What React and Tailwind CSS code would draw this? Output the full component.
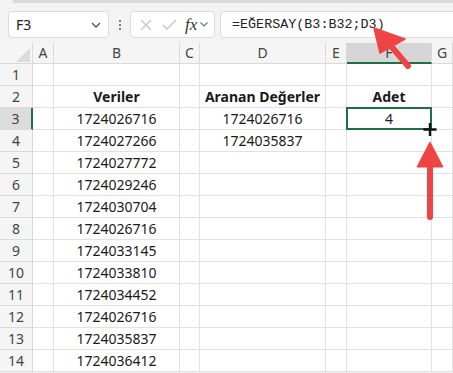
import React from "react";

const colB = [
  "1724026716","1724027266","1724027772","1724029246","1724030704","1724026716",
  "1724033145","1724033810","1724034452","1724026716","1724035837","1724036412",
];

function Cell({ children, className = "" }) {
  return (
    <div className={`border-r border-b border-[#e1e1e1] bg-white flex items-center justify-center text-[14px] text-[#1a1a1a] leading-none ${className}`}>
      {children}
    </div>
  );
}

function RowHead({ n, active }) {
  return (
    <div className={`border-r border-b border-[#dadada] flex items-center justify-center text-[14px] leading-none text-[#444] ${active ? "bg-[#dcdcdc] border-r-2 border-r-[#1e7145]" : "bg-[#f5f5f5]"}`}>
      {n}
    </div>
  );
}

export default function App() {
  const rows = [];
  for (let r = 1; r <= 14; r++) {
    const b = r === 2 ? <span className="font-bold">Veriler</span> : r >= 3 ? colB[r - 3] : "";
    const d = r === 2 ? <span className="font-bold">Aranan Değerler</span> : r === 3 ? "1724026716" : r === 4 ? "1724035837" : "";
    const f = r === 2 ? <span className="font-bold">Adet</span> : r === 3 ? "4" : "";
    rows.push(
      <React.Fragment key={r}>
        <RowHead n={r} active={r === 3} />
        <Cell />
        <Cell>{b}</Cell>
        <Cell />
        <Cell>{d}</Cell>
        <Cell />
        <Cell className="relative">
          {f}
          {r === 3 && <div className="absolute left-[-1px] top-[-1px] right-[-1px] bottom-[-1px] border-2 border-[#1e7145]" />}
        </Cell>
        <Cell />
      </React.Fragment>
    );
  }

  return (
    <div className="relative w-[453px] h-[373px] overflow-hidden bg-[#f3f3f3]" style={{ fontFamily: '"Noto Sans", "Open Sans", sans-serif' }}>
      <div className="h-[3px] ml-[13px] bg-[#d9d9d9]" />
      {/* top bar */}
      <div className="h-[40px] flex items-center pt-[3px]">
        <div className="shrink-0 ml-[8px] w-[101px] h-[27px] bg-white border border-[#dcdcdc] rounded-[4px] flex items-center justify-between pl-[7px] pr-[6px]">
          <span className="text-[14px] text-[#222] leading-none">F3</span>
          <svg width="12" height="8" viewBox="0 0 12 8"><path d="M2 2 L6 6 L10 2" fill="none" stroke="#555" strokeWidth="1.3" /></svg>
        </div>
        <div className="shrink-0 w-[21px] flex flex-col items-center gap-[2px]">
          <span className="w-[2px] h-[2px] bg-[#555] rounded-full" />
          <span className="w-[2px] h-[2px] bg-[#555] rounded-full" />
          <span className="w-[2px] h-[2px] bg-[#555] rounded-full" />
        </div>
        <div className="shrink-0 w-[85px] h-[27px] bg-white border border-[#dcdcdc] rounded-[4px] flex items-center pl-[8px]">
          <svg width="14" height="14" viewBox="0 0 14 14" className="mr-[9px]"><path d="M2 2 L12 12 M12 2 L2 12" stroke="#c4c4c4" strokeWidth="1.3" /></svg>
          <svg width="15" height="12" viewBox="0 0 15 12" className="mr-[8px]"><path d="M1 6 L5 10 L14 1" fill="none" stroke="#c4c4c4" strokeWidth="1.3" /></svg>
          <span className="text-[17px] italic text-[#333] leading-none mr-[2px]" style={{ fontFamily: '"Liberation Serif", serif' }}>fx</span>
          <svg width="10" height="7" viewBox="0 0 10 7"><path d="M1.5 1.5 L5 5 L8.5 1.5" fill="none" stroke="#777" strokeWidth="1.2" /></svg>
        </div>
        <div className="shrink-0 ml-[5px] w-[260px] h-[27px] bg-white border border-[#dcdcdc] rounded-[4px] flex items-center pl-[11px]">
          <span className="text-[13.4px] text-[#222] leading-none" style={{ fontFamily: '"Liberation Mono", monospace' }}>=EĞERSAY(B3:B32;D3)</span>
        </div>
      </div>
      {/* sheet */}
      <div className="grid grid-cols-[33px_21px_126px_20px_126px_21px_85px_21px] grid-rows-[21px] auto-rows-[22px]">
        <div className="border-r border-b border-[#dadada] bg-[#f5f5f5] relative">
          <svg className="absolute left-[16px] top-[5px]" width="14" height="14" viewBox="0 0 14 14"><path d="M14 0 L14 14 L0 14 Z" fill="#dcdcdc" /></svg>
        </div>
        {["A", "B", "C", "D", "E", "F", "G"].map((c) => (
          <div
            key={c}
            className={`flex items-center justify-center text-[14px] leading-none text-[#444] border-r border-[#dadada] ${c === "F" ? "bg-[#d6d6d6] border-b-2 border-b-[#1e7145]" : "bg-[#f5f5f5] border-b"}`}
          >
            {c}
          </div>
        ))}
        {rows}
      </div>
      {/* overlays: arrows and cursor */}
      <svg className="absolute left-0 top-0 pointer-events-none" width="453" height="373" viewBox="0 0 453 373">
        <path d="M391 46 L408 66" stroke="#ef4444" strokeWidth="6" strokeLinecap="round" />
        <path d="M374 28 L405 39 L380 53 Z" fill="#ef4444" stroke="#ef4444" strokeWidth="1.5" strokeLinejoin="round" />
        <path d="M430 166 L430 217" stroke="#ef4444" strokeWidth="6" strokeLinecap="round" />
        <path d="M430 142 L443 167 L417 167 Z" fill="#ef4444" stroke="#ef4444" strokeWidth="1" strokeLinejoin="round" />
        <path d="M430 123 L430 136 M423.5 129.5 L436.5 129.5" stroke="#111" strokeWidth="2.4" />
      </svg>
    </div>
  );
}
